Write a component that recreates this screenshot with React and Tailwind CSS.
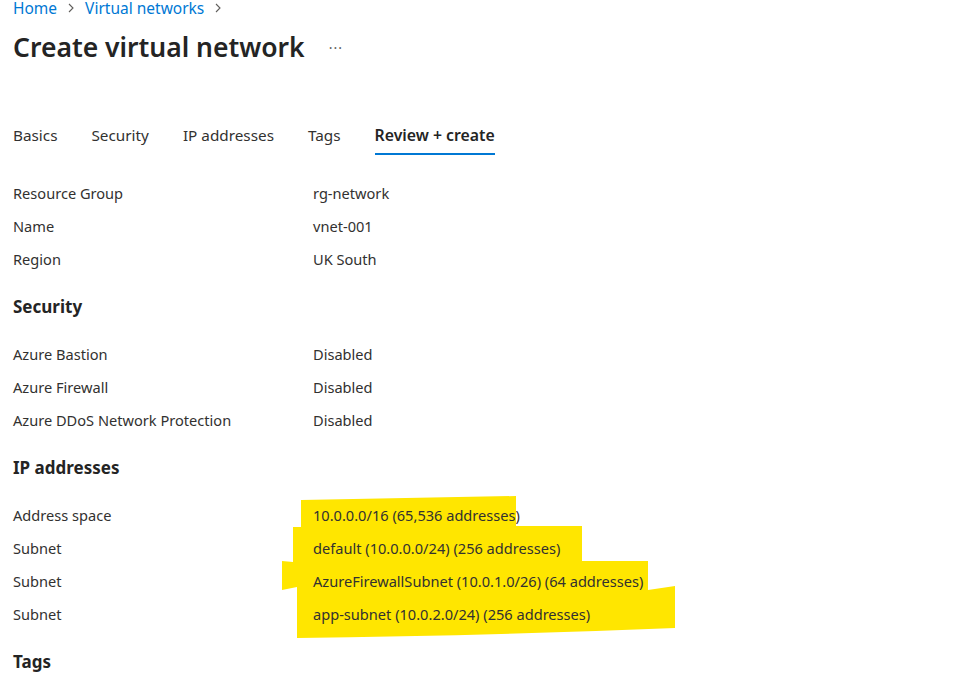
import React from "react";

const Row = ({ label, value }) => (
  <div className="flex h-[33px] items-center text-[14.6px] text-[#323130]">
    <div className="w-[300px]">{label}</div>
    <div>{value}</div>
  </div>
);

const Heading = ({ children }) => (
  <div className="flex h-[62px] items-center text-[17px] font-bold text-[#242424]">{children}</div>
);

const Chevron = () => (
  <svg width="10" height="12" viewBox="0 0 10 12">
    <path d="M3 2 L7 6 L3 10" fill="none" stroke="#605e5c" strokeWidth="1.1" />
  </svg>
);

export default function App() {
  const tabs = ["Basics", "Security", "IP addresses", "Tags"];
  return (
    <div
      className="relative h-[679px] w-[967px] overflow-hidden bg-white px-[13px]"
      style={{ fontFamily: '"Segoe UI", "Noto Sans", sans-serif' }}
    >
      <svg className="absolute left-[280px] top-[490px] h-[155px] w-[400px]" viewBox="0 0 400 155">
        <path
          d="M21,10 L236,6 L236,36 L302,36 L302,71 L368,71 L368,100 L395,96 L395,138 Q200,146 17,148 L17,97 L2,100 L2,71 L13,72 L13,37 L21,37 Z"
          fill="#ffe600"
        />
      </svg>
      <div className="relative">
        <div className="-mt-[1px] flex h-[18px] items-center gap-[9px] text-[15.5px] leading-[18px] text-[#0078d4]">
          <span>Home</span>
          <Chevron />
          <span>Virtual networks</span>
          <Chevron />
        </div>
        <div className="mt-[12px] flex h-[36px] items-center">
          <span className="text-[26.5px] font-semibold leading-[36px] text-[#242424]">Create virtual network</span>
          <span className="ml-[24px] text-[14px] tracking-[1px] text-[#605e5c]">···</span>
        </div>
        <div className="mt-[60px] flex gap-[34px] text-[15.3px] text-[#323130]">
          {tabs.map((t) => (
            <div key={t} className="h-[30px] leading-[20px]">{t}</div>
          ))}
          <div className="h-[30px] border-b-2 border-[#0078d4] text-[15.8px] font-semibold leading-[20px] text-[#242424]">Review + create</div>
        </div>
        <div className="mt-[22px]">
          <Row label="Resource Group" value="rg-network" />
          <Row label="Name" value="vnet-001" />
          <Row label="Region" value="UK South" />
        </div>
        <Heading>Security</Heading>
        <Row label="Azure Bastion" value="Disabled" />
        <Row label="Azure Firewall" value="Disabled" />
        <Row label="Azure DDoS Network Protection" value="Disabled" />
        <Heading>IP addresses</Heading>
        <Row label="Address space" value="10.0.0.0/16 (65,536 addresses)" />
        <Row label="Subnet" value="default (10.0.0.0/24) (256 addresses)" />
        <Row label="Subnet" value="AzureFirewallSubnet (10.0.1.0/26) (64 addresses)" />
        <Row label="Subnet" value="app-subnet (10.0.2.0/24) (256 addresses)" />
        <Heading>Tags</Heading>
      </div>
    </div>
  );
}
